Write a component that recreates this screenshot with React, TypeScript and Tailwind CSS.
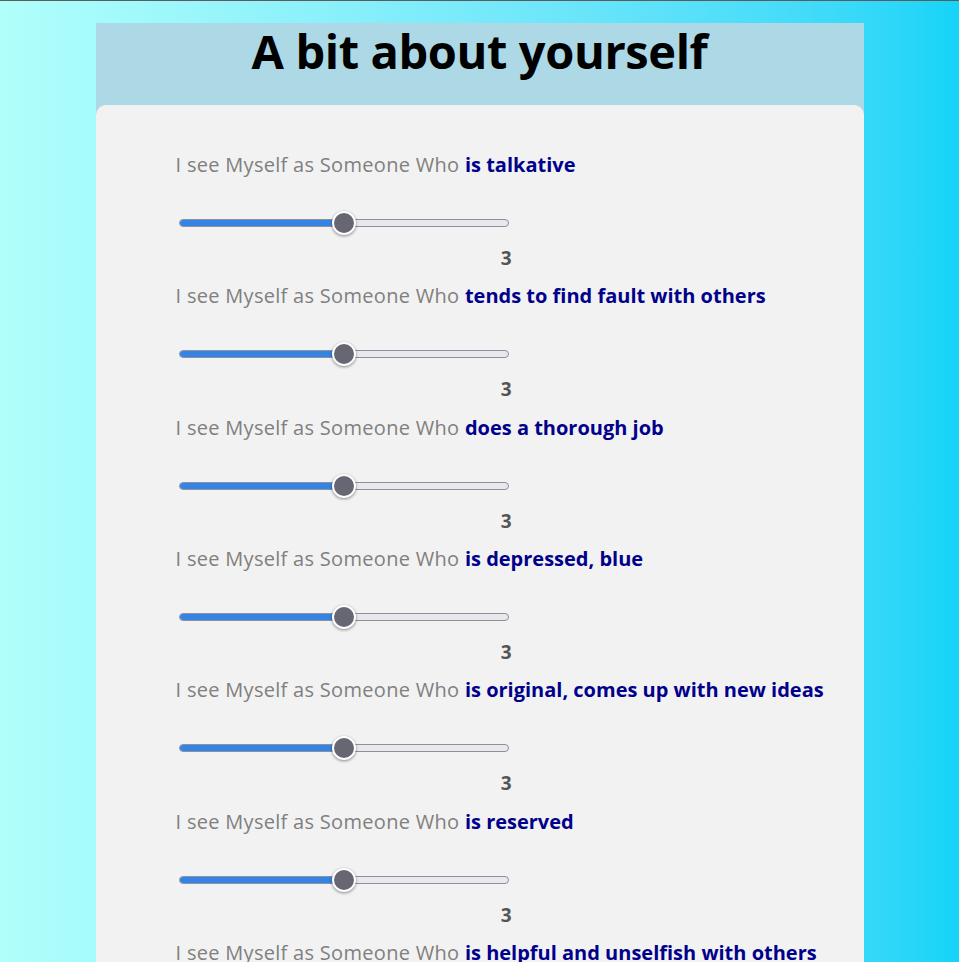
import React from 'react';

const traits = [
  'is talkative',
  'tends to find fault with others',
  'does a thorough job',
  'is depressed, blue',
  'is original, comes up with new ideas',
  'is reserved',
  'is helpful and unselfish with others',
];

const Slider: React.FC<{ value: number }> = ({ value }) => {
  const pct = ((value - 1) / 4) * 100;
  return (
    <div className="relative h-[24px] w-[330px] flex items-center">
      <div className="relative h-[8px] w-full rounded-full border border-[#8f8f9d] bg-[#e9e9ed] overflow-hidden">
        <div className="absolute left-0 top-0 h-full bg-[#3584e4]" style={{ width: `${pct}%` }} />
      </div>
      <div
        className="absolute top-0 h-[24px] w-[24px] -translate-x-1/2 rounded-full border-2 border-white bg-[#676774] shadow-[0_1px_3px_rgba(0,0,0,0.45)]"
        style={{ left: `${pct}%` }}
      />
    </div>
  );
};

export default function App() {
  return (
    <div className="min-h-screen border-t border-[#5c5c5c] bg-gradient-to-r from-[#b0fffb] to-[#12d4f8] pt-[22px] font-['Open_Sans',sans-serif]">
      <div className="mx-auto w-[768px] bg-[#add8e6]">
        <div className="flex h-[82px] justify-center">
          <h1 className="text-[47px] font-bold leading-[56px] tracking-[-0.4px] text-black">A bit about yourself</h1>
        </div>
        <div className="rounded-t-[10px] bg-[#f2f2f2] pl-[80px] pt-[45px]">
          {traits.map((t) => (
            <div key={t} className="pb-[11.33px]">
              <div className="flex h-[30px] items-center text-[20px] text-[#808080]">
                <span className="tracking-[0.3px]">I see Myself as Someone Who&nbsp;</span>
                <span className="font-bold text-[#00008b]">{t}</span>
              </div>
              <div className="mt-[31px] pl-[3px]">
                <Slider value={3} />
              </div>
              <div className="mt-[11px] w-[336px] text-right text-[19px] font-bold leading-[24px] text-[#555555]">3</div>
            </div>
          ))}
        </div>
      </div>
    </div>
  );
}
